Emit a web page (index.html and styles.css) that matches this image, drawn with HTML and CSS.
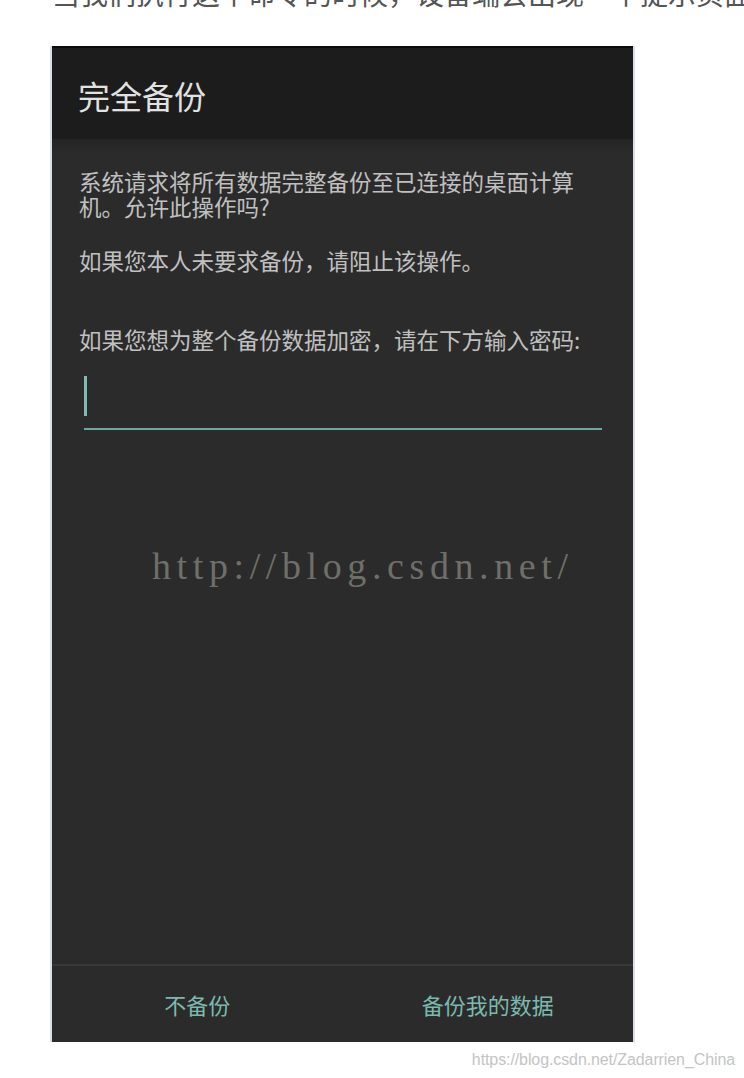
FILE: index.html
```html
<!DOCTYPE html>
<html lang="zh-CN">
<head>
<meta charset="utf-8">
<title>完全备份</title>
<link rel="stylesheet" href="styles.css">
</head>
<body>
<div class="intro">当我们执行这个命令的时候，设备端会出现一个提示页面</div>
<div class="phone">
  <div class="header"><span class="title">完全备份</span></div>
  <div class="content">
    <p class="para first">系统请求将所有数据完整备份至已连接的桌面计算机。允许此操作吗?</p>
    <p class="para second">如果您本人未要求备份，请阻止该操作。</p>
    <p class="para third">如果您想为整个备份数据加密，请在下方输入密码:</p>
    <div class="field">
      <span class="cursor"></span>
      <span class="underline"></span>
    </div>
    <div class="mark">http://blog.csdn.net/</div>
  </div>
  <div class="footer">
    <div class="btn">不备份</div>
    <div class="btn">备份我的数据</div>
  </div>
</div>
<div class="credit">https://blog.csdn.net/Zadarrien_China</div>
</body>
</html>
```

FILE: styles.css
```css
html, body {
  margin: 0;
  padding: 0;
  background: #ffffff;
}
body {
  width: 744px;
  height: 1078px;
  overflow: hidden;
  font-family: "Noto Sans CJK SC", "Noto Sans", sans-serif;
}
.intro {
  margin-top: -23px;
  padding-left: 52px;
  font-size: 28px;
  line-height: 32px;
  color: #555555;
  white-space: nowrap;
  overflow: hidden;
}
.phone {
  margin-top: 37px;
  margin-left: 50px;
  width: 581px;
  height: 996px;
  border-left: 2px solid #d9dfea;
  border-right: 2px solid #d9dfea;
  display: flex;
  flex-direction: column;
  background: #2b2b2b;
}
.header {
  height: 91px;
  border-top: 2px solid #0c0c0c;
  background: #1c1c1c;
  display: flex;
  align-items: center;
  padding-left: 26px;
}
.title {
  font-size: 32px;
  line-height: 36px;
  color: #e2e2e2;
  margin-top: 2px;
}
.content {
  flex: 1;
  background: linear-gradient(#242424, #2b2b2b 14px);
  padding: 30px 0 0 27px;
  display: flex;
  flex-direction: column;
  align-items: flex-start;
}
.para {
  margin: 0;
  width: 510px;
  font-size: 22.5px;
  line-height: 25px;
  color: #c0c0c0;
}
.second { margin-top: 29px; }
.third { margin-top: 54px; }
.field {
  margin-top: 24px;
  margin-left: 5px;
  width: 518px;
  display: flex;
  flex-direction: column;
}
.cursor {
  width: 3px;
  height: 40px;
  background: #7dbab2;
}
.underline {
  margin-top: 12px;
  height: 2px;
  background: #6ea7a0;
}
.mark {
  margin-top: 114px;
  margin-left: 73px;
  font-family: "Liberation Serif", serif;
  font-size: 38px;
  line-height: 44px;
  letter-spacing: 5.6px;
  color: #6f6f69;
}
.footer {
  height: 76px;
  border-top: 2px solid #383838;
  display: grid;
  grid-template-columns: 1fr 1fr;
  align-items: center;
}
.btn {
  text-align: center;
  font-size: 22px;
  line-height: 28px;
  color: #7bb9b0;
}
.credit {
  margin-top: 8px;
  padding-right: 9px;
  text-align: right;
  font-family: "Liberation Sans", sans-serif;
  font-size: 16px;
  line-height: 20px;
  color: #c4c4c4;
  letter-spacing: -0.1px;
}
```
